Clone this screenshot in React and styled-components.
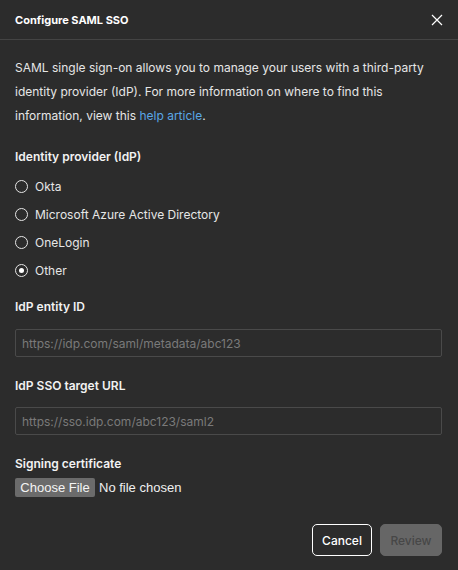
import React, { useState } from 'react';
import styled, { createGlobalStyle } from 'styled-components';

const GlobalStyle = createGlobalStyle`
  * { box-sizing: border-box; }
  html, body {
    margin: 0;
    padding: 0;
    background: #2c2c2c;
  }
  body {
    font-family: Inter, "Noto Sans", sans-serif;
    color: #e6e6e6;
  }
`;

const S = {
  Dialog: styled.div`
    width: 458px;
    height: 570px;
    background: #2c2c2c;
    display: flex;
    flex-direction: column;
  `,
  Header: styled.header`
    height: 40px;
    padding: 0 15px;
    display: flex;
    align-items: center;
    justify-content: space-between;
    border-bottom: 1px solid #444444;
  `,
  Title: styled.h1`
    margin: 0;
    font-size: 11px;
    font-weight: 700;
    color: #ffffff;
  `,
  Close: styled.button`
    width: 14px;
    height: 14px;
    margin-right: -1px;
    padding: 0;
    border: 0;
    background: none;
    display: flex;
    align-items: center;
    justify-content: center;
    cursor: pointer;
  `,
  Body: styled.div`
    flex: 1;
    padding: 16px 16px 14px 15px;
    display: flex;
    flex-direction: column;
  `,
  Intro: styled.p`
    margin: 0;
    font-size: 12px;
    line-height: 24px;
    color: #e6e6e6;
  `,
  Link: styled.a`
    color: #5aa7e6;
    text-decoration: none;
  `,
  Label: styled.label`
    display: block;
    margin-top: ${(p) => p.$top}px;
    font-size: 12px;
    line-height: 16px;
    font-weight: 600;
    color: #f2f2f2;
  `,
  RadioGroup: styled.div`
    margin-top: 7px;
    display: flex;
    flex-direction: column;
  `,
  RadioRow: styled.label`
    height: 28px;
    display: flex;
    align-items: center;
    gap: 7px;
    font-size: 12px;
    color: #e6e6e6;
    cursor: pointer;
  `,
  Radio: styled.input`
    appearance: none;
    margin: 0;
    width: 13px;
    height: 13px;
    border: 1px solid #e6e6e6;
    border-radius: 50%;
    display: grid;
    place-items: center;
    &::after {
      content: '';
      width: 5px;
      height: 5px;
      border-radius: 50%;
      background: #ffffff;
      transform: scale(0);
    }
    &:checked::after {
      transform: scale(1);
    }
  `,
  TextInput: styled.input`
    margin-top: ${(p) => p.$top}px;
    width: 100%;
    height: 28px;
    padding: 0 6px;
    border: 1px solid #4a4a4a;
    border-radius: 2px;
    background: #2c2c2c;
    color: #e6e6e6;
    font-family: Inter, sans-serif;
    font-size: 12px;
    outline: none;
    &::placeholder {
      color: #7a7a7a;
    }
  `,
  FileRow: styled.div`
    margin-top: 6px;
    display: flex;
    align-items: center;
    gap: 4px;
    font-family: "Liberation Sans", Arial, sans-serif;
    font-size: 13px;
    color: #f0f0f0;
  `,
  FileButton: styled.label`
    width: 80px;
    height: 19px;
    display: flex;
    align-items: center;
    justify-content: center;
    background: #6b6b6b;
    border-radius: 2px;
    color: #f4f4f4;
    cursor: pointer;
  `,
  HiddenFile: styled.input`
    display: none;
  `,
  Footer: styled.div`
    margin-top: auto;
    display: flex;
    justify-content: flex-end;
    gap: 8px;
  `,
  Button: styled.button`
    width: ${(p) => p.$width}px;
    height: 32px;
    padding: 0;
    border-radius: 5px;
    font-family: Inter, sans-serif;
    font-size: 12px;
    font-weight: 500;
    border: 1px solid ${(p) => (p.$primary ? '#666666' : '#ffffff')};
    background: ${(p) => (p.$primary ? '#666666' : 'transparent')};
    color: ${(p) => (p.$primary ? '#474747' : '#ffffff')};
    cursor: ${(p) => (p.disabled ? 'default' : 'pointer')};
  `,
};

const providers = ['Okta', 'Microsoft Azure Active Directory', 'OneLogin', 'Other'];

export default function App() {
  const [provider, setProvider] = useState('Other');
  const [fileName, setFileName] = useState('');

  return (
    <>
      <GlobalStyle />
      <S.Dialog>
        <S.Header>
          <S.Title>Configure SAML SSO</S.Title>
          <S.Close aria-label="Close">
            <svg width="12" height="12" viewBox="0 0 12 12">
              <path d="M1 1L11 11M11 1L1 11" stroke="#ffffff" strokeWidth="1.2" />
            </svg>
          </S.Close>
        </S.Header>
        <S.Body>
          <S.Intro>
            SAML single sign-on allows you to manage your users with a third-party
            identity provider (IdP). For more information on where to find this
            information, view this <S.Link href="#">help article</S.Link>.
          </S.Intro>

          <S.Label $top={21}>Identity provider (IdP)</S.Label>
          <S.RadioGroup>
            {providers.map((name) => (
              <S.RadioRow key={name}>
                <S.Radio
                  type="radio"
                  name="idp"
                  checked={provider === name}
                  onChange={() => setProvider(name)}
                />
                {name}
              </S.RadioRow>
            ))}
          </S.RadioGroup>

          <S.Label $top={15} htmlFor="entity">IdP entity ID</S.Label>
          <S.TextInput id="entity" $top={14} placeholder="https://idp.com/saml/metadata/abc123" />

          <S.Label $top={21} htmlFor="sso">IdP SSO target URL</S.Label>
          <S.TextInput id="sso" $top={13} placeholder="https://sso.idp.com/abc123/saml2" />

          <S.Label $top={21}>Signing certificate</S.Label>
          <S.FileRow>
            <S.FileButton>
              Choose File
              <S.HiddenFile
                type="file"
                onChange={(e) => setFileName(e.target.files[0]?.name || '')}
              />
            </S.FileButton>
            <span>{fileName || 'No file chosen'}</span>
          </S.FileRow>

          <S.Footer>
            <S.Button $width={60}>Cancel</S.Button>
            <S.Button $width={62} $primary disabled>Review</S.Button>
          </S.Footer>
        </S.Body>
      </S.Dialog>
    </>
  );
}
